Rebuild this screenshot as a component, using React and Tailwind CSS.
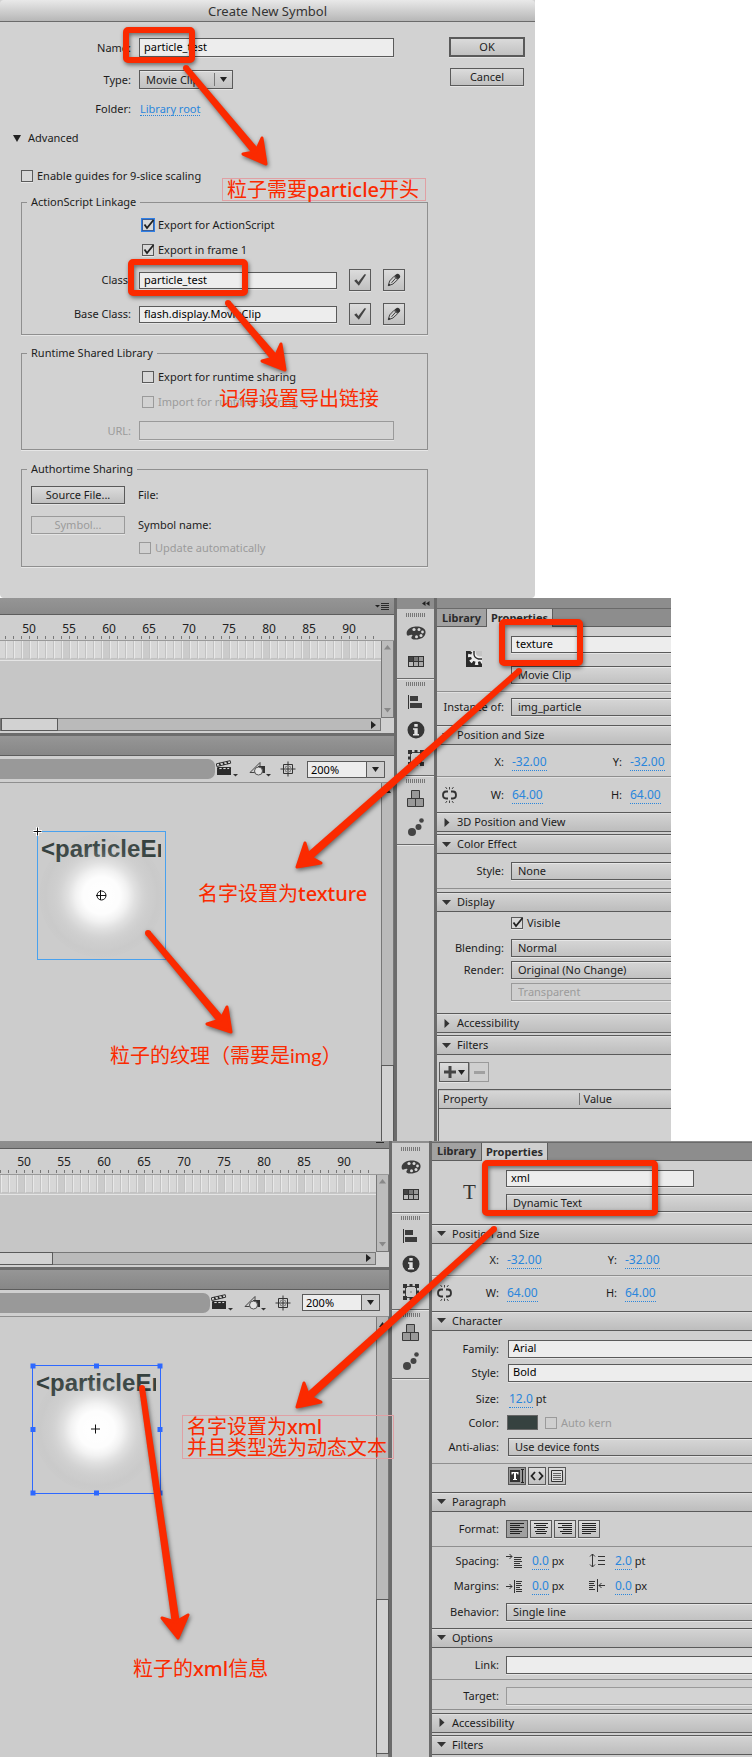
import React, { useId } from "react";

const FIELD =
  "border border-[#5a5a5a] bg-[#ededed] px-1 pb-[2px] text-black shadow-[0_1px_0_#e4e4e4] outline-none rounded-none";
const MENU =
  "appearance-none rounded-none border border-[#5a5a5a] bg-linear-to-b from-[#d6d6d6] to-[#c2c2c2] px-[6px] text-[#1c1c1c] shadow-[inset_0_1px_0_#e6e6e6,0_1px_0_#e4e4e4] outline-none";
const BUTTON =
  "flex items-center justify-center border border-[#5a5a5a] bg-linear-to-b from-[#dcdcdc] to-[#c0c0c0] shadow-[0_1px_0_#e4e4e4]";

function Check({ label, checked = false, disabled = false, focused = false }) {
  const id = useId();
  return (
    <div className={disabled ? "flex h-4 items-center gap-1 text-[#9b9b9b]" : "flex h-4 items-center gap-1"}>
      <span className="relative block h-3 w-3">
        <input
          id={id}
          type="checkbox"
          defaultChecked={checked}
          disabled={disabled}
          className={
            disabled
              ? "block h-3 w-3 appearance-none border border-[#9a9a9a]"
              : focused
                ? "block h-3 w-3 appearance-none border border-[#3a5f9a] bg-[#d8d8d8] outline outline-[#2f7fe6]"
                : "block h-3 w-3 appearance-none border border-[#5a5a5a] bg-[#d8d8d8] shadow-[0_1px_0_#e8e8e8]"
          }
        />
        {checked && (
          <svg className="pointer-events-none absolute inset-0 overflow-visible" width="12" height="12" viewBox="0 0 12 12">
            <path d="M2.5 5.5 5 9 11.5 1" fill="none" stroke="#222" strokeWidth="1.8" />
          </svg>
        )}
      </span>
      <label htmlFor={id}>{label}</label>
    </div>
  );
}

function Group({ title, className, children }) {
  return (
    <fieldset className={"border border-[#8f8f8f] shadow-[0_1px_0_#e6e6e6] " + className}>
      <legend className="ml-[5px] h-4 px-1 leading-4">{title}</legend>
      {children}
    </fieldset>
  );
}

function CheckIcon() {
  return (
    <svg width="14" height="14" viewBox="0 0 14 14">
      <path d="M1.2 7.8 3.4 6.2 5.4 9 11.4 1.2 13.2 1.6 5.900 12.8Z" fill="#444" />
    </svg>
  );
}

function PencilIcon() {
  return (
    <svg width="14" height="14" viewBox="0 0 14 14">
      <path d="M7.4 2.8 9.6.9q1.6-.7 2.9.8t.4 2.8L11 6.5Z" fill="#333" />
      <path d="M7 3.3 2.6 8 1.3 12.7 6 11l4.6-4.3Z" fill="#ccc" stroke="#444" />
      <path d="m1.2 12.9.7-2.3 1.6 1.5Z" fill="#222" />
      <path d="M4.500 9.800 8.600 5.200" stroke="#444" />
    </svg>
  );
}

function ClassRow({ label, value, className }) {
  const id = useId();
  return (
    <div className={"flex h-[22px] items-center " + className}>
      <label htmlFor={id} className="mr-2 w-[109px] text-right">{label}</label>
      <input id={id} defaultValue={value} className={"h-[17px] w-[198px] " + FIELD} />
      <button aria-label="Validate class" className={"ml-3 h-[22px] w-[22px] " + BUTTON}><CheckIcon /></button>
      <button aria-label="Edit class" className={"ml-3 h-[22px] w-[22px] " + BUTTON}><PencilIcon /></button>
    </div>
  );
}

function SymbolDialog() {
  return (
    <section className="w-full max-w-[535px] rounded-b-sm bg-[#d2d2d2]">
      <h1 className="flex h-[22px] items-center justify-center rounded-t-sm border-b border-[#6b6b6b] bg-linear-to-b from-[#e9e9e9] to-[#b7b7b7] text-[13px] text-[#333]">
        Create New Symbol
      </h1>
      <div className="flex gap-[21px] pr-[10px] pb-[31px] pl-[21px]">
        <form className="min-w-0 flex-1 pt-4">
          <div className="flex h-[19px] items-center gap-2">
            <label htmlFor="name" className="w-[110px] text-right">Name:</label>
            <input id="name" defaultValue="particle_test" className={"h-[19px] w-[255px] " + FIELD} />
          </div>
          <div className="mt-[13px] flex h-[19px] items-center gap-2">
            <label htmlFor="type" className="w-[110px] text-right">Type:</label>
            <div className="relative">
              <select id="type" className={"block h-[19px] w-[94px] " + MENU}>
                <option>Movie Clip</option>
              </select>
              <svg className="pointer-events-none absolute top-0 right-0" width="20" height="19" viewBox="0 0 20 19">
                <path d="M1.5 3v13" stroke="#777" />
                <path d="M7 7h7l-3.500 5Z" fill="#222" />
              </svg>
            </div>
          </div>
          <div className="mt-3 flex h-4 items-center gap-[9px]">
            <span className="w-[110px] text-right">Folder:</span>
            <a href="#library" className="border-b border-dotted border-[#2a86dc] leading-[13px] text-[#2a86dc]">Library root</a>
          </div>
          <button type="button" className="mt-[13px] -ml-2 flex h-4 items-center gap-[7px]">
            <svg width="8" height="7" viewBox="0 0 8 7"><path d="M0 0h8L4 7Z" fill="#222" /></svg>
            Advanced
          </button>
          <div className="mt-[22px]"><Check label="Enable guides for 9-slice scaling" /></div>

          <Group title="ActionScript Linkage" className="mt-[10px] pb-[9px]">
            <div className="mt-[7px] ml-[120px]"><Check label="Export for ActionScript" checked focused /></div>
            <div className="mt-[9px] ml-[120px]"><Check label="Export in frame 1" checked /></div>
            <ClassRow label="Class:" value="particle_test" className="mt-[11px]" />
            <ClassRow label="Base Class:" value="flash.display.MovieClip" className="mt-3" />
          </Group>

          <Group title="Runtime Shared Library" className="mt-[10px] pb-[9px]">
            <div className="mt-2 ml-[120px]"><Check label="Export for runtime sharing" /></div>
            <div className="mt-[9px] ml-[120px]"><Check label="Import for runtime sharing" disabled /></div>
            <div className="mt-[11px] flex h-[19px] items-center gap-2">
              <label htmlFor="url" className="w-[109px] text-right text-[#9b9b9b]">URL:</label>
              <input id="url" disabled className="h-[19px] w-[255px] border border-[#9a9a9a] bg-[#d4d4d4] shadow-[0_1px_0_#e4e4e4]" />
            </div>
          </Group>

          <Group title="Authortime Sharing" className="mt-[11px] pb-[10px]">
            <div className="mt-[9px] ml-[9px] flex h-[18px] items-center gap-[13px]">
              <button type="button" className={"h-[18px] w-[94px] " + BUTTON}>Source File...</button>
              <span>File:</span>
            </div>
            <div className="mt-3 ml-[9px] flex h-[18px] items-center gap-[13px]">
              <button type="button" disabled className="flex h-[18px] w-[94px] items-center justify-center border border-[#9a9a9a] text-[#9b9b9b] shadow-[0_1px_0_#e4e4e4]">Symbol...</button>
              <span>Symbol name:</span>
            </div>
            <div className="mt-[6px] ml-[117px]"><Check label="Update automatically" disabled /></div>
          </Group>
        </form>
        <div className="flex w-[76px] flex-col gap-[11px] pt-[15px]">
          <button className={"h-5 outline -outline-offset-2 outline-[#5a5a5a] " + BUTTON}>OK</button>
          <button className={"mx-px h-[18px] " + BUTTON}>Cancel</button>
        </div>
      </div>
    </section>
  );
}

/* ---------- stage and timeline ---------- */

const FRAMES = Array.from({ length: 48 }, (_, i) => i);
const MARKS = [50, 55, 60, 65, 70, 75, 80, 85, 90];

function Timeline() {
  return (
    <div>
      <div className="flex h-[17px] items-center justify-end border-b border-[#5d5d5d] bg-linear-to-b from-[#959595] to-[#8a8a8a] pr-1">
        <svg width="15" height="9" viewBox="0 0 15 9">
          <path d="M0 3h5L2.5 5.5Z" fill="#222" />
          <path d="M6 1.5h8M6 3.5h8M6 5.5h8M6 7.5h8" stroke="#2a2a2a" />
        </svg>
      </div>
      <div className="h-[26px] overflow-hidden border-b border-[#999] bg-[#cfcfcf]">
        <div className="flex h-[21px] items-center pt-[6px] pl-[9px] text-[12px] text-[#222]">
          {MARKS.map((n) => <span key={n} className="w-10 shrink-0 text-center">{n}</span>)}
        </div>
        <div className="-ml-0.5 flex h-[3px]">
          {FRAMES.slice(0, 47).map((i) => <span key={i} className="h-[3px] w-2 shrink-0 border-r border-[#777]" />)}
        </div>
      </div>
      <div className="flex h-[77px]">
        <div className="min-w-0 flex-1 bg-[#c6c6c6]">
          <div className="-ml-0.5 flex h-5 overflow-hidden border-b border-[#e4e4e4]">
            {FRAMES.map((i) => (
              <span
                key={i}
                className={
                  i % 5 === 3
                    ? "h-[18px] w-2 shrink-0 border-r border-b border-l border-r-[#c2c2c2] border-b-[#c2c2c2] border-l-[#e8e8e8] bg-[#cbcbcb]"
                    : "h-[18px] w-2 shrink-0 border-r border-b border-l border-r-[#c2c2c2] border-b-[#c2c2c2] border-l-[#e8e8e8] bg-[#d7d7d7]"
                }
              />
            ))}
          </div>
        </div>
        <div className="flex w-[13px] flex-col items-center justify-between border-x border-b border-[#777] bg-[#bcbcbc] py-1">
          <svg width="7" height="5" viewBox="0 0 7 5"><path d="M0 4.500h7L3.500 0Z" fill="#888" /></svg>
          <svg width="7" height="5" viewBox="0 0 7 5"><path d="M0 0h7L3.500 4.500Z" fill="#888" /></svg>
        </div>
      </div>
      <div className="flex h-[15px] bg-[#d0d0d0] pr-[13px]">
        <div className="flex h-[13px] flex-1 items-center justify-between border border-[#777] bg-[#bababa] pr-1">
          <span className="-my-px h-[13px] w-[57px] border border-[#5a5a5a] bg-[#d2d2d2]" />
          <svg width="5" height="8" viewBox="0 0 5 8"><path d="M0 0v8l5-4Z" fill="#222" /></svg>
        </div>
      </div>
    </div>
  );
}

function EditBar() {
  return (
    <div className="flex h-[27px] items-center border-b border-[#8f8f8f] bg-[#cfcfcf]">
      <span className="h-5 w-[215px] rounded-r-[7px] bg-[#999]" />
      <button aria-label="Edit scene" className="ml-px">
        <svg width="23" height="20" viewBox="0 0 23 20">
          <path d="M1 9h14v7H1Z" fill="#2c2c2c" />
          <path d="M1.500 8.500h13v2h-13z" fill="#ddd" stroke="#333" />
          <path d="m3 8.500-1 2M7 8.500l-1 2M11 8.500l-1 2M14.500 8.500l-1 2" stroke="#222" strokeWidth="1.500" />
          <path d="m.8 7.500-.4-2.700L14.200 1.700l.5 2.500Z" fill="#ddd" stroke="#333" />
          <path d="m3.200 4.200 1.300 2.400M7 3.400l1.300 2.400M10.800 2.600l1.300 2.400" stroke="#222" strokeWidth="1.500" />
          <path d="M17 15h5l-2.500 2.500Z" fill="#333" />
        </svg>
      </button>
      <button aria-label="Edit symbols" className="ml-[10px]">
        <svg width="22" height="20" viewBox="0 0 22 20">
          <path d="M1 13.500 11 3.500V14" fill="none" stroke="#444" />
          <path d="M1 13.500h8" stroke="#444" />
          <path d="M9 7h7v7H9Z" fill="#333" />
          <circle cx="9.500" cy="12" r="4" fill="#e2e2e2" stroke="#555" />
          <path d="M17 15h5l-2.500 2.500Z" fill="#333" />
        </svg>
      </button>
      <button aria-label="Center stage" className="ml-[9px]">
        <svg width="16" height="16" viewBox="0 0 16 16">
          <path d="M8 .5v15M.5 8h15" stroke="#333" />
          <path d="M3.500 3.500h9v9h-9Z" fill="none" stroke="#333" />
          <path d="M5.500 5.500h5v5h-5Z" fill="none" stroke="#888" />
        </svg>
      </button>
      <div className="relative ml-[11px]">
        <select aria-label="Zoom" className="block h-[17px] w-[78px] appearance-none border border-[#5a5a5a] bg-[#ededed] pl-[3px] text-black">
          <option>200%</option>
        </select>
        <svg className="pointer-events-none absolute top-0 right-0" width="19" height="17" viewBox="0 0 19 17">
          <path d="M.5.500h18v16H.5Z" fill="#cecece" stroke="#5a5a5a" />
          <path d="M6 6h7l-3.500 5Z" fill="#222" />
        </svg>
      </div>
    </div>
  );
}

function Particle({ selected }) {
  const glow = selected ? "glow-b" : "glow-a";
  return (
    <div
      className={
        selected
          ? "absolute top-[48px] left-[37px] h-[129px] w-[129px] border border-[#2d68ff]"
          : "absolute top-[48px] left-[37px] h-[129px] w-[129px] border border-[#49a1ee]"
      }
    >
      <div className="absolute top-px left-[3px] h-8 w-[120px] overflow-hidden font-['Liberation_Sans',Arial,sans-serif] text-[24px] leading-8 font-bold whitespace-nowrap text-[#364240]">
        &lt;particleEm
      </div>
      <svg className="absolute inset-0 overflow-visible" width="127" height="127" viewBox="0 0 127 127">
        <defs>
          <radialGradient id={glow}>
            <stop offset="0" stopColor="#fff" />
            <stop offset=".3" stopColor="#fff" stopOpacity=".96" />
            <stop offset=".42" stopColor="#fff" stopOpacity=".74" />
            <stop offset=".54" stopColor="#fff" stopOpacity=".4" />
            <stop offset=".66" stopColor="#fff" stopOpacity=".16" />
            <stop offset=".8" stopColor="#e0e0e0" stopOpacity=".05" />
            <stop offset=".9" stopColor="#b0b0b0" stopOpacity=".08" />
            <stop offset="1" stopColor="#b0b0b0" stopOpacity=".04" />
          </radialGradient>
        </defs>
        <circle cx="63.500" cy="63.500" r="62" fill={"url(#" + glow + ")"} />
        {selected ? (
          <>
            <path d="M62.500 58.500v9M58 63h9" stroke="#111" />
            {[[0, 0], [63.500, 0], [127, 0], [0, 63.500], [127, 63.500], [0, 127], [63.500, 127], [127, 127]].map(([x, y]) => (
              <rect key={x + "-" + y} x={x - 2.500} y={y - 2.500} width="5" height="5" fill="#2d68ff" />
            ))}
          </>
        ) : (
          <>
            <circle cx="63.500" cy="63.500" r="4.500" fill="none" stroke="#111" />
            <path d="M62.500 58v10M58 63.500h10" stroke="#111" />
            <path d="M-.5-5v9M-5-.5h9" stroke="#fff" strokeWidth="3" />
            <path d="M-.5-4.500v8M-4.500-.5h8" stroke="#111" />
          </>
        )}
      </svg>
    </div>
  );
}

function Stage({ selected = false }) {
  return (
    <div className="flex w-[394px] shrink-0 flex-col">
      <Timeline />
      <div className="h-[3px] bg-[#6c6c6c]" />
      <div className="h-5 border-b border-[#5d5d5d] bg-linear-to-b from-[#969696] to-[#878787]" />
      <EditBar />
      <div className="flex flex-1">
        <div className="relative flex-1 bg-[#cccccc]"><Particle selected={selected} /></div>
        <div className="flex w-[13px] flex-col items-center border-x border-[#777] bg-[#bababa] pt-[5px]">
          <svg width="7" height="5" viewBox="0 0 7 5"><path d="M0 5h7L3.500 0Z" fill="#222" /></svg>
          <span className={selected ? "mt-[272px] h-[155px] w-[13px] border border-[#5a5a5a] bg-[#d2d2d2]" : "mt-[272px] w-[13px] flex-1 border border-b-0 border-[#5a5a5a] bg-[#d2d2d2]"} />
        </div>
      </div>
    </div>
  );
}

/* ---------- tool strip ---------- */

const TOOLS = {
  palette: (
    <svg width="20" height="14" viewBox="0 0 20 14">
      <path d="M1 9C-.5 5 3 1.500 8 .7 13-.2 19 1.500 19.500 5.500S17 13 11.500 13.500 5 12.500 5.500 11 7.500 9 5.500 8.800 2 11 1 9Z" fill="#3c3c3c" />
      <circle cx="8" cy="3.500" r="1.600" fill="#d8d8d8" />
      <circle cx="13" cy="3.500" r="1.500" fill="#d8d8d8" />
      <circle cx="16.500" cy="6" r="1.400" fill="#d8d8d8" />
      <circle cx="15" cy="9.500" r="1.500" fill="#d8d8d8" />
      <circle cx="10.500" cy="10.700" r="1.500" fill="#d8d8d8" />
    </svg>
  ),
  swatches: (
    <svg width="16" height="11" viewBox="0 0 16 11">
      <path d="M0 0h16v11H0Z" fill="#333" />
      <path d="M6 1h4v4H6Z" fill="#777" />
      <path d="M11 1h4v4h-4Z" fill="#999" />
      <path d="M1 1h4v4H1Z" fill="#444" />
      <path d="M1 6h4v4H1Z" fill="#bbb" />
      <path d="M6 6h4v4H6ZM11 6h4v4h-4Z" fill="#aaa" />
    </svg>
  ),
  align: (
    <svg width="15" height="14" viewBox="0 0 15 14">
      <path d="M.5 0v14" stroke="#333" />
      <path d="M2 1h8v5H2ZM2 8h12v5H2Z" fill="#3c3c3c" />
    </svg>
  ),
  info: (
    <svg width="18" height="18" viewBox="0 0 18 18">
      <circle cx="9" cy="9" r="8.500" fill="#363636" />
      <path d="M7.300 3h3.400v2.800H7.300ZM6 7.300h4.700V13H12v1.500H6V13h1.300V8.800H6Z" fill="#e2e2e2" />
    </svg>
  ),
  transform: (
    <svg width="16" height="16" viewBox="0 0 16 16">
      <path d="M2.500 2.500h11v11h-11Z" fill="none" stroke="#444" />
      <path d="M0 0h4v4H0ZM12 0h4v4h-4ZM0 12h4v4H0ZM12 12h4v4h-4ZM6.500 0h3v3h-3ZM6.500 13h3v3h-3ZM0 6.500h3v3H0ZM13 6.500h3v3h-3ZM7.500 7.500h1v1h-1Z" fill="#333" />
    </svg>
  ),
  cubes: (
    <svg width="17" height="18" viewBox="0 0 17 18">
      <path d="M4.500.5h8v8h-8ZM.5 8.500h8v8h-8ZM8.500 8.500h8v8h-8Z" fill="#999" stroke="#3a3a3a" />
    </svg>
  ),
  dots: (
    <svg width="18" height="18" viewBox="0 0 18 18">
      <circle cx="5" cy="14" r="4" fill="#444" />
      <circle cx="11.500" cy="9" r="3" fill="#444" />
      <circle cx="14.500" cy="2.500" r="2.300" fill="#444" />
    </svg>
  ),
};

function ToolGroup({ names, className }) {
  return (
    <div className={"flex flex-col items-center border-b border-[#6a6a6a] pb-[3px] shadow-[0_1px_0_#e4e4e4] " + className}>
      <svg className="mb-[2px]" width="20" height="4" viewBox="0 0 20 4">
        <path d="M.5 0v4M2.500 0v4M4.500 0v4M6.500 0v4M8.500 0v4M10.500 0v4M12.500 0v4M14.500 0v4M16.500 0v4M18.500 0v4" stroke="#777" />
      </svg>
      {names.map((n) => (
        <button key={n} aria-label={n} className="flex h-7 w-7 items-center justify-center">{TOOLS[n]}</button>
      ))}
    </div>
  );
}

function ToolStrip() {
  return (
    <div className="w-[43px] shrink-0 border-x-3 border-[#6b6b6b] bg-[#cccccc]">
      <div className="flex h-[11px] items-center justify-end bg-[#8d8d8d] pr-1">
        <svg width="8" height="5" viewBox="0 0 8 5"><path d="M3.500 0v5L0 2.500ZM7.500 0v5L4 2.500Z" fill="#222" /></svg>
      </div>
      <ToolGroup names={["palette", "swatches"]} className="pt-1" />
      <ToolGroup names={["align", "info", "transform"]} className="pt-[3px]" />
      <ToolGroup names={["cubes", "dots"]} className="pt-[3px]" />
    </div>
  );
}

/* ---------- properties ---------- */

function Tabs() {
  return (
    <>
      <div className="h-[11px] border-b border-[#6a6a6a] bg-[#8d8d8d]" />
      <div role="tablist" className="flex h-[18px] bg-[#8d8d8d] font-bold text-[#2b2b2b]">
        <button role="tab" aria-selected="false" className="w-[50px] border-r border-b border-[#5d5d5d] bg-[#a2a2a2]">Library</button>
        <button role="tab" aria-selected="true" className="w-[66px] border-r border-[#5d5d5d] bg-[#cfcfcf]">Properties</button>
        <span className="flex-1 border-b border-[#5d5d5d]" />
      </div>
    </>
  );
}

function Header({ children, closed = false, className = "" }) {
  return (
    <button
      aria-expanded={!closed}
      className={"flex h-5 w-full items-center gap-[6px] border-y border-[#5a5a5a] bg-linear-to-b from-[#d4d4d4] to-[#bdbdbd] pl-[5px] text-[#1c1c1c] shadow-[inset_0_1px_0_#dedede] " + className}
    >
      <svg width="9" height="9" viewBox="0 0 9 9">
        {closed ? <path d="M2.500 0v9L7.500 4.500Z" fill="#333" /> : <path d="M0 2h9L4.500 7Z" fill="#333" />}
      </svg>
      {children}
    </button>
  );
}

function Value({ children }) {
  return <a href="#edit" className="border-b border-dotted border-[#2a86dc] text-[12px] leading-[13px] text-[#2a86dc]">{children}</a>;
}

function Pair({ a, b, av, bv }) {
  return (
    <>
      <span className="w-[67px] shrink-0 text-right">{a}</span>
      <span className="w-[102px] shrink-0 pl-2"><Value>{av}</Value></span>
      <span className="w-4 shrink-0 text-right">{b}</span>
      <span className="shrink-0 pl-2"><Value>{bv}</Value></span>
    </>
  );
}

function PositionAndSize() {
  return (
    <>
      <Header>Position and Size</Header>
      <div className="flex h-8 items-center border-b border-[#8f8f8f] pt-[2px] shadow-[0_1px_0_#e0e0e0]">
        <Pair a="X:" av="-32.00" b="Y:" bv="-32.00" />
      </div>
      <div className="relative flex h-[35px] items-center">
        <button aria-label="Lock width and height" className="absolute left-[5px]">
          <svg width="15" height="16" viewBox="0 0 15 16">
            <path d="M6 4.500H4Q1 4.500 1 8t3 3.500h2M9 4.500h2q3 0 3 3.500t-3 3.500H9" fill="none" stroke="#333" strokeWidth="1.800" />
            <path d="M5 2 3.500 0M7.500 2.500V0M10 2l1.500-2M5 14l-1.500 2M7.500 13.500V16M10 14l1.500 2" stroke="#444" />
          </svg>
        </button>
        <Pair a="W:" av="64.00" b="H:" bv="64.00" />
      </div>
    </>
  );
}

function MenuRow({ label, value, className = "", disabled = false, wide = false }) {
  const id = useId();
  return (
    <div className={"flex h-[18px] items-center " + className}>
      <label htmlFor={id} className="w-[67px] shrink-0 text-right whitespace-nowrap">{label}</label>
      <select
        id={id}
        disabled={disabled}
        aria-label={label ? undefined : value}
        className={
          (disabled
            ? "h-[18px] min-w-0 flex-1 appearance-none rounded-none border border-r-0 border-[#9a9a9a] px-[6px] text-[#9b9b9b] shadow-[0_1px_0_#e4e4e4] "
            : "h-[18px] min-w-0 flex-1 border-r-0 " + MENU + " ") + (wide ? "ml-[9px]" : "ml-[7px]")
        }
      >
        <option>{value}</option>
      </select>
    </div>
  );
}

function TextRow({ label, value, className = "", disabled = false, wide = false }) {
  const id = useId();
  return (
    <div className={"flex h-[18px] items-center " + className}>
      <label htmlFor={id} className="w-[67px] shrink-0 text-right">{label}</label>
      <input
        id={id}
        disabled={disabled}
        defaultValue={value}
        className={
          (disabled
            ? "h-[18px] min-w-0 flex-1 border border-r-0 border-[#9a9a9a] bg-[#d3d3d3] shadow-[0_1px_0_#e4e4e4] "
            : "h-[18px] min-w-0 flex-1 border-r-0 " + FIELD + " ") + (wide ? "ml-[9px]" : "ml-[7px]")
        }
      />
    </div>
  );
}

function ClipProperties() {
  return (
    <div className="min-w-0 flex-1 bg-[#cfcfcf]">
      <Tabs />
      <div className="flex border-b border-[#8f8f8f] pt-[9px] pb-[7px] shadow-[0_1px_0_#e0e0e0]">
        <div className="w-[74px] shrink-0 pt-[15px] pl-[29px]">
          <svg width="16" height="16" viewBox="0 0 16 16">
            <path d="M0 0h16v16H0Z" fill="#2a2a2a" />
            <circle cx="11" cy="5" r="6" fill="#ececec" />
            <circle cx="11" cy="5" r="7" fill="none" stroke="#ececec" strokeWidth="4" strokeDasharray="2.900 2.600" strokeDashoffset="1.200" />
            <path d="M8 0v3.500q.5 3.500 4.500 4.500H16" fill="none" stroke="#2a2a2a" strokeWidth="1.400" />
            <path d="M9.500 0H16v5.500h-2.500Q9.500 5 9.500 0Z" fill="#c4c4c4" />
          </svg>
        </div>
        <div className="min-w-0 flex-1">
          <input aria-label="Instance name" defaultValue="texture" className={"block h-[17px] w-full border-r-0 " + FIELD} />
          <select aria-label="Instance type" className={"mt-[13px] block h-[18px] w-full border-r-0 " + MENU}>
            <option>Movie Clip</option>
          </select>
        </div>
      </div>
      <MenuRow label="Instance of:" value="img_particle" className="mt-[6px] mb-[9px]" />
      <PositionAndSize />
      <Header closed>3D Position and View</Header>
      <Header className="mt-[2px]">Color Effect</Header>
      <div className="border-b border-[#8f8f8f] py-2"><MenuRow label="Style:" value="None" /></div>
      <Header className="mt-[3px]">Display</Header>
      <div className="flex h-[22px] items-center pl-[74px]"><Check label="Visible" checked /></div>
      <MenuRow label="Blending:" value="Normal" className="mt-[5px]" />
      <MenuRow label="Render:" value="Original (No Change)" className="mt-1" />
      <MenuRow label="" value="Transparent" disabled className="mt-1 mb-3" />
      <Header closed>Accessibility</Header>
      <Header className="mt-[2px]">Filters</Header>
      <div className="mt-[7px] ml-[2px] flex">
        <button aria-label="Add filter" className={"h-5 w-[30px] " + BUTTON}>
          <svg width="21" height="12" viewBox="0 0 21 12">
            <path d="M4.500 0h3v4.500H12v3H7.500V12h-3V7.500H0v-3h4.500Z" fill="#444" />
            <path d="M14 4h7l-3.500 5Z" fill="#222" />
          </svg>
        </button>
        <button aria-label="Remove filter" disabled className="flex h-5 w-5 items-center justify-center border border-[#9a9a9a]">
          <span className="h-[3px] w-[11px] bg-[#a0a0a0]" />
        </button>
      </div>
      <table className="mt-[7px] ml-px w-full border-collapse text-left">
        <thead>
          <tr className="h-[19px] border border-[#5a5a5a] bg-linear-to-b from-[#d6d6d6] to-[#bfbfbf]">
            <th className="w-[141px] p-0 pl-1 font-normal">
              <span className="flex items-center justify-between">Property<span className="h-3 w-px bg-[#777]" /></span>
            </th>
            <th className="p-0 pl-1 font-normal">Value</th>
          </tr>
        </thead>
        <tbody><tr className="h-8 border-l border-[#5a5a5a] bg-[#d2d2d2]"><td colSpan={2} /></tr></tbody>
      </table>
    </div>
  );
}

function Lines({ rows }) {
  return (
    <svg width="16" height="13" viewBox="0 0 16 13">
      {rows.map(([x, w], i) => <rect key={i} x={x} y={i * 2 + 1} width={w} height="1" fill="#222" />)}
    </svg>
  );
}

const FORMATS = [
  ["Align left", [[1, 14], [1, 10], [1, 14], [1, 9], [1, 12], [1, 10]]],
  ["Align center", [[1, 14], [3, 10], [1, 14], [4, 8], [2, 12], [3, 10]]],
  ["Align right", [[1, 14], [5, 10], [1, 14], [6, 9], [3, 12], [5, 10]]],
  ["Justify", [[1, 14], [1, 14], [1, 14], [1, 14], [1, 14], [1, 9]]],
];

function Measure({ label, icon, value, unit }) {
  return (
    <>
      <svg className="shrink-0" width="18" height="16" viewBox="0 0 18 16" role="img" aria-label={label}>
        <path d={icon} fill="none" stroke="#333" />
      </svg>
      <span className="w-[65px] shrink-0 pl-2 whitespace-nowrap"><Value>{value}</Value> {unit}</span>
    </>
  );
}

function TextProperties() {
  return (
    <div className="min-w-0 flex-1 bg-[#cfcfcf]">
      <Tabs />
      <div className="flex pt-[9px] pb-3">
        <div className="w-[74px] shrink-0 pt-2 pl-[31px] font-['Liberation_Serif',serif] text-[21px] leading-7 text-[#333]">T</div>
        <div className="min-w-0 flex-1">
          <input aria-label="Instance name" defaultValue="xml" className={"block h-[17px] w-[188px] " + FIELD} />
          <select aria-label="Text type" className={"mt-[7px] block h-[18px] w-full border-r-0 pb-[2px] " + MENU}>
            <option>Dynamic Text</option>
          </select>
        </div>
      </div>
      <PositionAndSize />
      <Header>Character</Header>
      <TextRow label="Family:" value="Arial" wide className="mt-[9px]" />
      <TextRow label="Style:" value="Bold" wide className="mt-[6px]" />
      <div className="mt-2 flex h-[18px] items-center">
        <span className="w-[67px] text-right">Size:</span>
        <span className="pl-[10px]"><Value>12.0</Value> pt</span>
      </div>
      <div className="mt-[6px] flex h-[18px] items-center">
        <span className="w-[67px] text-right">Color:</span>
        <button aria-label="Text color" className="mr-[7px] ml-2 h-[15px] w-[31px] border border-[#666] bg-[#364240]" />
        <Check label="Auto kern" disabled />
      </div>
      <MenuRow label="Anti-alias:" value="Use device fonts" wide className="mt-[6px]" />
      <div className="mt-[7px] border-t border-[#8f8f8f]" />
      <div className="mt-[3px] mb-[7px] ml-[76px] flex gap-[2px]">
        <button aria-label="Selectable" className="flex h-[18px] w-[18px] items-center justify-center border border-[#555] bg-[#999]">
          <svg width="15" height="14" viewBox="0 0 15 14">
            <path d="M0 1h10v12H0Z" fill="#333" />
            <path d="M1.500 3h7v2.500h-1L7 4.200H6V10h1v1H3v-1h1V4.200H3l-.5 1.300h-1Z" fill="#fff" />
            <path d="M12.500 1v12M11 .5h3M11 13.500h3" stroke="#222" />
          </svg>
        </button>
        <button aria-label="Render as HTML" className={"h-[18px] w-[18px] " + BUTTON}>
          <svg width="14" height="10" viewBox="0 0 14 10"><path d="M5 1 1.500 5 5 9M9 1l3.500 4L9 9" fill="none" stroke="#222" strokeWidth="1.800" /></svg>
        </button>
        <button aria-label="Show border" className={"h-[18px] w-[18px] " + BUTTON}>
          <svg width="12" height="12" viewBox="0 0 12 12"><path d="M.5.500h11v11H.5Z" fill="#ddd" stroke="#333" /><path d="M2 3.500h8M2 5.500h8M2 7.500h8M2 9.500h8" stroke="#666" /></svg>
        </button>
      </div>
      <Header>Paragraph</Header>
      <div className="mt-2 flex h-[18px] items-center">
        <span className="mr-[7px] w-[67px] text-right">Format:</span>
        <div className="flex gap-[2px]">
          {FORMATS.map(([name, rows], i) => (
            <button
              key={name}
              aria-label={name}
              className={i === 0 ? "flex h-[18px] w-[22px] items-center justify-center border border-[#555] bg-[#a0a0a0]" : "h-[18px] w-[22px] " + BUTTON}
            >
              <Lines rows={rows} />
            </button>
          ))}
        </div>
      </div>
      <div className="mt-2 border-t border-[#8f8f8f]" />
      <div className="mt-[5px] flex h-[18px] items-center">
        <span className="mr-[7px] w-[67px] shrink-0 text-right">Spacing:</span>
        <Measure label="Indent" icon="M0 3.500h6M3.500 1 6 3.500 3.500 6M8 4.500h8M8 6.500h7M8 8.500h8M8 10.500h6M8 12.500h8M8 14.500h8" value="0.0" unit="px" />
        <Measure label="Line spacing" icon="M3.500 1v13M1 3.500 3.500 1 6 3.500M1 11.500 3.500 14 6 11.500M9 3.500h7M9 7.500h7M9 11.500h7" value="2.0" unit="pt" />
      </div>
      <div className="mt-[7px] flex h-[18px] items-center">
        <span className="mr-[7px] w-[67px] shrink-0 text-right">Margins:</span>
        <Measure label="Left margin" icon="M0 8.500h6M3.500 6 6 8.500 3.500 11M8.500 2v13M10 3.500h6M10 5.500h5M10 7.500h6M10 9.500h4M10 11.500h6M10 13.500h6" value="0.0" unit="px" />
        <Measure label="Right margin" icon="M0 3.500h6M0 5.500h5M0 7.500h6M0 9.500h4M0 11.500h6M8.500 1v13M16 7.500h-6M12.500 5 10 7.500 12.500 10" value="0.0" unit="px" />
      </div>
      <MenuRow label="Behavior:" value="Single line" className="mt-2 mb-[7px]" />
      <Header>Options</Header>
      <TextRow label="Link:" className="mt-2" />
      <div className="mt-[5px] border-t border-[#8f8f8f]" />
      <TextRow label="Target:" disabled className="mt-[7px]" />
      <div className="mt-1 border-t border-[#8f8f8f]" />
      <Header closed className="mt-[3px]">Accessibility</Header>
      <Header className="mt-[2px]">Filters</Header>
      <div className="h-[2px]" />
    </div>
  );
}

/* ---------- annotations ---------- */

function Arrow({ from, to, barbs }) {
  const dx = to[0] - from[0];
  const dy = to[1] - from[1];
  const len = Math.hypot(dx, dy);
  const ux = dx / len;
  const uy = dy / len;
  const neck = [to[0] - ux * 16, to[1] - uy * 16];
  const side = (p, w, s) => `${p[0] - uy * w * s} ${p[1] + ux * w * s}`;
  return (
    <g fill="#fb2a00" stroke="#fb2a00" strokeLinejoin="round">
      <circle cx={from[0]} cy={from[1]} r="3" stroke="none" />
      <path stroke="none" d={`M${side(from, 3, 1)} L${side(neck, 4, 1)} L${side(neck, 4, -1)} L${side(from, 3, -1)}Z`} />
      <path strokeWidth="3" d={`M${barbs[0].join(" ")} L${to.join(" ")} L${barbs[1].join(" ")} L${neck.join(" ")}Z`} />
    </g>
  );
}

const NOTE = "absolute text-[20px] leading-[21px] whitespace-nowrap text-[#fb2a00]";

function Annotations() {
  return (
    <div className="pointer-events-none absolute inset-0 overflow-hidden">
      <svg className="absolute top-0 left-0 drop-shadow-[1px_2px_2px_rgba(0,0,0,0.5)]" width="752" height="1757" viewBox="0 0 752 1757">
        <g fill="none" stroke="#fb2a00" strokeWidth="6">
          <rect x="126" y="30" width="66" height="30" rx="2" />
          <rect x="131" y="262" width="114" height="31" rx="2" />
          <rect x="502" y="622" width="78" height="41" rx="2" />
          <rect x="485" y="1163" width="170" height="50" rx="2" />
        </g>
        <Arrow from={[186, 68]} to={[266, 164]} barbs={[[243, 154], [262, 138]]} />
        <Arrow from={[228, 303]} to={[285, 370]} barbs={[[262, 361], [281, 344]]} />
        <Arrow from={[519, 671]} to={[297, 867]} barbs={[[305, 843], [321, 863]]} />
        <Arrow from={[148, 933]} to={[231, 1032]} barbs={[[207, 1024], [227, 1007]]} />
        <Arrow from={[494, 1229]} to={[297, 1407]} barbs={[[304, 1383], [321, 1402]]} />
        <Arrow from={[142, 1388]} to={[178, 1638]} barbs={[[162, 1618], [188, 1615]]} />
      </svg>
      <p className={NOTE + " top-[178px] left-[222px] border border-[#e0a0a4] pr-[6px] pl-1"}>
        粒子需要<span className="font-medium">particle</span>开头
      </p>
      <p className={NOTE + " top-[388px] left-[219px]"}>记得设置导出链接</p>
      <p className={NOTE + " top-[883px] left-[198px]"}>名字设置为<span className="font-medium">texture</span></p>
      <p className={NOTE + " top-[1045px] left-[110px]"}>粒子的纹理（需要是<span className="font-['Lato',sans-serif]">img</span>）</p>
      <p className={NOTE + " top-[1415px] left-[182px] border border-[#e0a0a4] pr-[6px] pl-1"}>
        名字设置为<span className="font-medium">xml</span><br />并且类型选为动态文本
      </p>
      <p className={NOTE + " top-[1658px] left-[133px]"}>粒子的<span className="font-medium">xml</span>信息</p>
    </div>
  );
}

export default function App() {
  return (
    <main className="relative w-full overflow-hidden bg-white font-['Noto_Sans','Noto_Sans_CJK_SC',sans-serif] text-[11px] leading-4 text-[#1c1c1c]">
      <SymbolDialog />
      <section className="flex w-full max-w-[671px] overflow-hidden">
        <Stage />
        <ToolStrip />
        <ClipProperties />
      </section>
      <section className="overflow-hidden">
        <div className="-mt-[9px] -ml-[5px] flex">
          <Stage selected />
          <ToolStrip />
          <TextProperties />
        </div>
      </section>
      <Annotations />
    </main>
  );
}
